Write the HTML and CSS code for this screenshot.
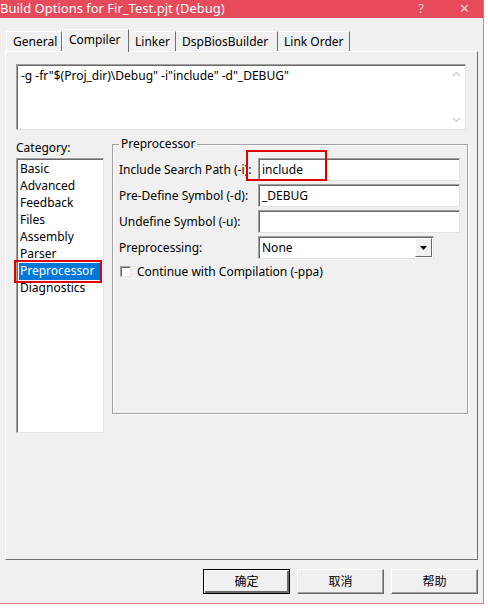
FILE: index.html
```html
<!DOCTYPE html>
<html>
<head>
<meta charset="utf-8">
<link rel="stylesheet" href="styles.css">
</head>
<body>

<div class="window">
  <div class="titlebar">
    <span class="title">Build Options for Fir_Test.pjt (Debug)</span>
    <span class="help">?</span>
    <span class="close">&#x2715;</span>
  </div>

  <div class="tabs">
    <div class="tab first">General</div>
    <div class="tab active">Compiler</div>
    <div class="tab">Linker</div>
    <div class="tab">DspBiosBuilder</div>
    <div class="tab">Link Order</div>
  </div>

  <div class="panel">
    <div class="cmdline">
      <span>-g -fr"$(Proj_dir)\Debug" -i"include" -d"_DEBUG"</span>
      <div class="vscroll">
        <svg width="9" height="6" viewBox="0 0 9 6"><path d="M1 5 L4.5 1.5 L8 5" fill="none" stroke="#c8c8c8" stroke-width="1.2"/></svg>
        <svg width="9" height="6" viewBox="0 0 9 6"><path d="M1 1 L4.5 4.5 L8 1" fill="none" stroke="#c8c8c8" stroke-width="1.2"/></svg>
      </div>
    </div>

    <div class="lower">
      <div class="category">
        <div class="catlabel">Category:</div>
        <div class="listbox">
          <div class="item">Basic</div>
          <div class="item">Advanced</div>
          <div class="item">Feedback</div>
          <div class="item">Files</div>
          <div class="item">Assembly</div>
          <div class="item">Parser</div>
          <div class="item selected">Preprocessor<div class="mark mark-item"></div></div>
          <div class="item">Diagnostics</div>
        </div>
      </div>

      <div class="group">
        <div class="legend">Preprocessor</div>
        <div class="fields">
          <div class="lbl">Include Search Path (-i):</div>
          <div class="edit">include<div class="mark mark-field"></div></div>
          <div class="lbl">Pre-Define Symbol (-d):</div>
          <div class="edit">_DEBUG</div>
          <div class="lbl">Undefine Symbol (-u):</div>
          <div class="edit"></div>
          <div class="lbl">Preprocessing:</div>
          <div class="combo">
            <span>None</span>
            <div class="drop">
              <svg width="7" height="4" viewBox="0 0 7 4"><path d="M0 0 H7 L3.5 4 Z" fill="#000"/></svg>
            </div>
          </div>
        </div>
        <div class="check">
          <div class="box"></div>
          <span>Continue with Compilation (-ppa)</span>
        </div>
      </div>
    </div>
  </div>

  <div class="buttons">
    <div class="btn default">确定</div>
    <div class="btn">取消</div>
    <div class="btn">帮助</div>
  </div>
</div>

</body>
</html>
```

FILE: styles.css
```css
body {
  margin: 0;
  padding: 0;
  background-color: #ffffff;
  font-family: "Noto Sans", "Noto Sans CJK SC", sans-serif;
  font-size: 12px;
  color: #000;
}

.window {
  width: 483px;
  height: 603px;
  background-color: #f0f0f0;
  border-right: 1px solid #e27585;
  border-bottom: 1px solid #e27585;
  display: flex;
  flex-direction: column;
}

.titlebar {
  height: 18px;
  background-color: #e64a5b;
  color: #fff;
  display: flex;
  align-items: center;
  font-size: 13px;
  position: relative;
}

.title {
  flex: 1;
  white-space: nowrap;
  margin-top: -3px;
}

.help {
  width: 48px;
  text-align: center;
  color: #f8c8cc;
  margin-top: -3px;
}

.close {
  width: 38px;
  text-align: center;
  color: #f8d0d4;
  font-size: 13px;
  margin-top: -3px;
}

/* tabs */
.tabs {
  display: flex;
  align-items: flex-end;
  height: 22px;
  margin-top: 11px;
  padding-left: 6px;
  position: relative;
  z-index: 1;
}

.tab {
  line-height: 20px;
  padding: 0 5px 0 6px;
  border-top: 1px solid #fff;
  border-right: 1px solid #6e6e6e;
  box-sizing: border-box;
  height: 20px;
}

.tab.first {
  border-left: 1px solid #fff;
  width: 56px;
}

.tab.active {
  height: 23px;
  margin-bottom: -1px;
  background-color: #f0f0f0;
  border-left: 1px solid #fff;
  width: 67px;
  line-height: 19px;
}

.tab:nth-child(3) { width: 47px; }
.tab:nth-child(4) { width: 102px; }
.tab:nth-child(5) { width: 72px; }

.panel {
  margin-left: 5px;
  width: 473px;
  height: 509px;
  border-top: 1px solid #fff;
  border-left: 1px solid #fff;
  border-right: 1px solid #6e6e6e;
  border-bottom: 1px solid #6e6e6e;
  box-sizing: border-box;
  padding: 12px 0 0 10px;
}

.cmdline {
  width: 450px;
  height: 66px;
  box-sizing: border-box;
  background-color: #fff;
  border-top: 1px solid #a0a0a0;
  border-left: 1px solid #a0a0a0;
  border-right: 1px solid #e3e3e3;
  border-bottom: 1px solid #e3e3e3;
  box-shadow: inset 1px 1px 0 #696969;
  display: flex;
  padding: 2px 0 0 4px;
}

.cmdline span {
  flex: 1;
}

.vscroll {
  width: 17px;
  display: flex;
  flex-direction: column;
  justify-content: space-between;
  align-items: center;
  padding: 6px 0 6px 0;
  margin-top: -2px;
}

.lower {
  display: flex;
  margin-top: 7px;
}

.category {
  width: 96px;
}

.catlabel {
  height: 21px;
  line-height: 21px;
}

.listbox {
  width: 88px;
  height: 275px;
  box-sizing: border-box;
  background-color: #fff;
  border-top: 1px solid #a0a0a0;
  border-left: 1px solid #a0a0a0;
  border-right: 1px solid #e3e3e3;
  border-bottom: 1px solid #e3e3e3;
  box-shadow: inset 1px 1px 0 #696969;
  padding: 2px 2px 0 2px;
}

.item {
  height: 17px;
  line-height: 16px;
  padding-left: 1px;
  position: relative;
}

.item.selected {
  background-color: #0078d7;
  color: #fff;
}

.mark {
  position: absolute;
  border: 2px solid #e00000;
}

.mark-item {
  left: -5px;
  top: -3px;
  width: 84px;
  height: 19px;
}

.mark-field {
  left: -13px;
  top: -9px;
  width: 77px;
  height: 27px;
}

.group {
  margin-top: 7px;
  width: 356px;
  height: 270px;
  box-sizing: border-box;
  border: 1px solid #a0a0a0;
  box-shadow: 1px 1px 0 #fff, inset 1px 1px 0 #fff;
  position: relative;
  padding: 13px 0 0 6px;
}

.legend {
  position: absolute;
  top: -9px;
  left: 6px;
  padding: 0 2px;
  background-color: #f0f0f0;
  line-height: 16px;
}

.fields {
  display: grid;
  grid-template-columns: 139px 202px;
  row-gap: 3px;
  align-items: center;
}

.lbl {
  white-space: nowrap;
}

.edit, .combo {
  height: 23px;
  box-sizing: border-box;
  background-color: #fff;
  border-top: 1px solid #a0a0a0;
  border-left: 1px solid #a0a0a0;
  border-right: 1px solid #e3e3e3;
  border-bottom: 1px solid #e3e3e3;
  box-shadow: inset 1px 1px 0 #696969;
  padding-left: 3px;
  line-height: 21px;
  position: relative;
}

.combo {
  width: 176px;
  display: flex;
  justify-content: space-between;
}

.drop {
  width: 17px;
  height: 19px;
  margin: 1px 1px 0 0;
  box-sizing: border-box;
  background-color: #f0f0f0;
  border-top: 1px solid #fff;
  border-left: 1px solid #fff;
  border-right: 1px solid #696969;
  border-bottom: 1px solid #696969;
  display: flex;
  align-items: center;
  justify-content: center;
}

.check {
  display: flex;
  align-items: center;
  margin-top: 3px;
  height: 18px;
}

.box {
  width: 11px;
  height: 11px;
  box-sizing: border-box;
  background-color: #fff;
  border-top: 1px solid #a0a0a0;
  border-left: 1px solid #a0a0a0;
  border-right: 1px solid #e3e3e3;
  border-bottom: 1px solid #e3e3e3;
  box-shadow: inset 1px 1px 0 #696969;
  margin: 0 6px 0 1px;
}

/* dialog buttons */
.buttons {
  display: flex;
  justify-content: flex-end;
  gap: 7px;
  width: 478px;
  margin-top: 9px;
}

.btn {
  width: 87px;
  height: 25px;
  box-sizing: border-box;
  text-align: center;
  line-height: 22px;
  font-family: "Noto Sans CJK SC", sans-serif;
  border-top: 1px solid #fff;
  border-left: 1px solid #fff;
  border-right: 1px solid #696969;
  border-bottom: 1px solid #696969;
  box-shadow: inset -1px -1px 0 #a0a0a0;
}

.btn.default {
  border: 1px solid #000;
  box-shadow: inset 1px 1px 0 #fff, inset -2px -2px 0 #696969;
}
```
